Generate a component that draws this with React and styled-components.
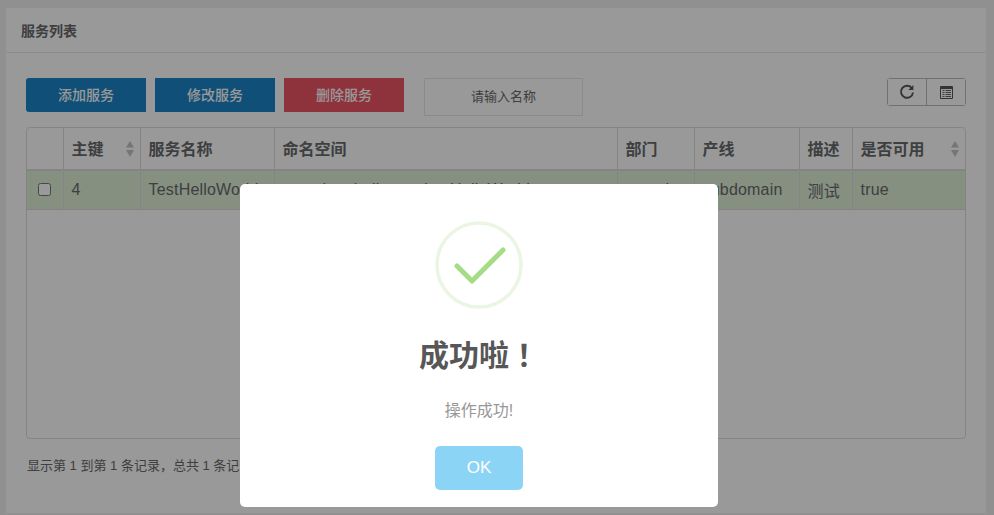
import React from 'react';
import styled, { createGlobalStyle } from 'styled-components';

const GlobalStyle = createGlobalStyle`
  html, body {
    margin: 0;
    height: 100%;
    overflow: hidden;
    background: #f0f0f0;
    font-family: "Liberation Sans", "Noto Sans CJK SC", sans-serif;
    color: #676a6c;
  }
`;

const Page = styled.div`
  padding: 8px 8px 0 6px;
  height: 515px;
  box-sizing: border-box;
`;

const Panel = styled.section`
  background: #fff;
  height: 505px;
`;

const PanelHeader = styled.header`
  height: 45px;
  box-sizing: border-box;
  padding: 0 15px;
  display: flex;
  align-items: center;
  border-bottom: 1px solid #e7eaec;
  font-size: 14px;
  font-weight: 700;
  color: #676a6c;
`;

const PanelBody = styled.div`
  padding: 25px 20px 0;
`;

const Toolbar = styled.div`
  display: flex;
  align-items: flex-start;
  height: 49px;
`;

const ActionButton = styled.button`
  width: 120px;
  height: 34px;
  margin-right: 9px;
  padding: 0 0 2px;
  border: 0;
  border-radius: ${(p) => (p.$first ? '3px 0 0 3px' : '0')};
  background: ${(p) => (p.$danger ? '#ed5565' : '#1c84c6')};
  color: #fff;
  font: 500 14px "Liberation Sans", "Noto Sans CJK SC", sans-serif;
`;

const SearchInput = styled.input`
  width: 159px;
  height: 38px;
  margin-left: 11px;
  padding: 0 0 2px;
  box-sizing: border-box;
  border: 1px solid #e5e6e7;
  border-radius: 1px;
  text-align: center;
  font: 13px "Liberation Sans", "Noto Sans CJK SC", sans-serif;
  &::placeholder {
    color: #676a6c;
    opacity: 1;
  }
`;

const IconGroup = styled.div`
  margin-left: auto;
  display: flex;
  height: 28px;
  box-sizing: border-box;
  border: 1px solid #bbb;
  border-radius: 3px;
`;

const IconButton = styled.button`
  width: ${(p) => (p.$last ? '39px' : '38px')};
  padding: 0;
  border: 0;
  border-left: ${(p) => (p.$last ? '1px solid #bbb' : '0')};
  background: #fff;
  display: flex;
  align-items: center;
  justify-content: center;
  color: #555;
`;

const TableWrap = styled.div`
  height: 312px;
  box-sizing: border-box;
  border: 1px solid #ddd;
  border-radius: 4px;
  overflow: hidden;
`;

const Table = styled.table`
  width: 938px;
  table-layout: fixed;
  border-collapse: collapse;
`;

const Th = styled.th`
  position: relative;
  height: 42px;
  padding: 0 8px 2px;
  box-sizing: border-box;
  border-right: 1px solid #ddd;
  border-bottom: 2px solid #ddd;
  text-align: left;
  font-size: 16px;
  font-weight: 700;
  color: #676a6c;
  &:last-child {
    border-right: 0;
  }
`;

const Td = styled.td`
  height: 39px;
  padding: 0 8px;
  box-sizing: border-box;
  background: #dff0d8;
  border-right: 1px solid #ddd;
  border-bottom: 1px solid #ddd;
  font-size: 16px;
  letter-spacing: 0.2px;
  color: #676a6c;
  white-space: nowrap;
  overflow: hidden;
  &:last-child {
    border-right: 0;
  }
`;

const CheckCell = styled(Td)`
  padding: 0 0 3px;
  text-align: center;
`;

const CheckBox = styled.input`
  width: 13px;
  height: 13px;
  margin: 0;
  vertical-align: middle;
`;

const SortMark = styled.svg`
  position: absolute;
  right: 5px;
  top: 13px;
`;

const Footer = styled.p`
  margin: 19px 0 0 1px;
  font-size: 13px;
  line-height: 16px;
  color: #676a6c;
`;

const Overlay = styled.div`
  position: fixed;
  inset: 0;
  background: rgba(0, 0, 0, 0.4);
  display: flex;
  justify-content: center;
  align-items: flex-start;
  padding: 184px 36px 0 0;
  box-sizing: border-box;
`;

const Dialog = styled.div`
  width: 478px;
  height: 323px;
  box-sizing: border-box;
  padding-top: 37px;
  background: #fff;
  border-radius: 5px;
  display: flex;
  flex-direction: column;
  align-items: center;
`;

const Title = styled.h2`
  margin: 24px 0 0;
  font-size: 30px;
  line-height: 40px;
  font-weight: 600;
  color: #575757;
`;

// the full-width mark sits centred in its cell in the TC cut
const TitleMark = styled.span`
  font-family: "Noto Sans CJK TC", sans-serif;
`;

const Message = styled.p`
  margin: 24px 0 0;
  font-size: 16px;
  line-height: 22px;
  color: #979797;
`;

const OkButton = styled.button`
  margin-top: 24px;
  width: 88px;
  height: 44px;
  border: 0;
  border-radius: 5px;
  background: #8cd4f5;
  color: #fff;
  font: 17px "Liberation Sans", "Noto Sans CJK SC", sans-serif;
`;

const columns = [36, 77, 134, 343, 77, 105, 53, 113];

const SortArrows = () => (
  <SortMark width="10" height="16" viewBox="0 0 10 16" fill="#c4c4c4">
    <path d="M5 0 L9 6.5 L1 6.5 Z M5 16 L9 9 L1 9 Z" />
  </SortMark>
);

const App = () => (
  <>
    <GlobalStyle />
    <Page>
      <Panel>
        <PanelHeader>服务列表</PanelHeader>
        <PanelBody>
          <Toolbar>
            <ActionButton $first>添加服务</ActionButton>
            <ActionButton>修改服务</ActionButton>
            <ActionButton $danger>删除服务</ActionButton>
            <SearchInput placeholder="请输入名称" />
            <IconGroup>
              <IconButton>
                <svg width="16" height="16" viewBox="0 0 16 16" fill="none" stroke="#555" strokeWidth="1.9">
                  <path d="M13 4.4 A6 6 0 1 0 14 8.5" />
                  <path d="M14.4 1 V6 H9.4" fill="#555" stroke="none" />
                </svg>
              </IconButton>
              <IconButton $last>
                <svg width="13" height="13" viewBox="0 0 13 13">
                  <path d="M0.5 0.5 H12.5 V12.5 H0.5 Z" fill="#fff" stroke="#555" />
                  <path d="M1 1 H12 V3 H1 Z" fill="#555" />
                  <path d="M2.5 4.5 H4.5 M5.5 4.5 H11 M2.5 6.5 H4.5 M5.5 6.5 H11 M2.5 8.5 H4.5 M5.5 8.5 H11 M2.5 10.5 H4.5 M5.5 10.5 H11" stroke="#666" strokeWidth="1" />
                </svg>
              </IconButton>
            </IconGroup>
          </Toolbar>
          <TableWrap>
            <Table>
              <colgroup>
                {columns.map((w, i) => (
                  <col key={i} width={w} />
                ))}
              </colgroup>
              <thead>
                <tr>
                  <Th />
                  <Th>主键<SortArrows /></Th>
                  <Th>服务名称</Th>
                  <Th>命名空间</Th>
                  <Th>部门</Th>
                  <Th>产线</Th>
                  <Th>描述</Th>
                  <Th>是否可用<SortArrows /></Th>
                </tr>
              </thead>
              <tbody>
                <tr>
                  <CheckCell><CheckBox type="checkbox" /></CheckCell>
                  <Td>4</Td>
                  <Td>TestHelloWorld</Td>
                  <Td>com.tiger.hello.service.HelloWorld</Td>
                  <Td>sample</Td>
                  <Td>subdomain</Td>
                  <Td>测试</Td>
                  <Td>true</Td>
                </tr>
              </tbody>
            </Table>
          </TableWrap>
          <Footer>显示第 1 到第 1 条记录，总共 1 条记录</Footer>
        </PanelBody>
      </Panel>
    </Page>
    <Overlay>
      <Dialog>
        <svg width="88" height="88" viewBox="0 0 88 88" fill="none">
          <circle cx="44" cy="44" r="42" stroke="#eaf6e2" strokeWidth="3.5" />
          <path d="M22 45 L37 60 L68 29" stroke="#a5dc86" strokeWidth="5" strokeLinecap="round" strokeLinejoin="round" />
        </svg>
        <Title>成功啦<TitleMark>！</TitleMark></Title>
        <Message>操作成功!</Message>
        <OkButton>OK</OkButton>
      </Dialog>
    </Overlay>
  </>
);

export default App;
